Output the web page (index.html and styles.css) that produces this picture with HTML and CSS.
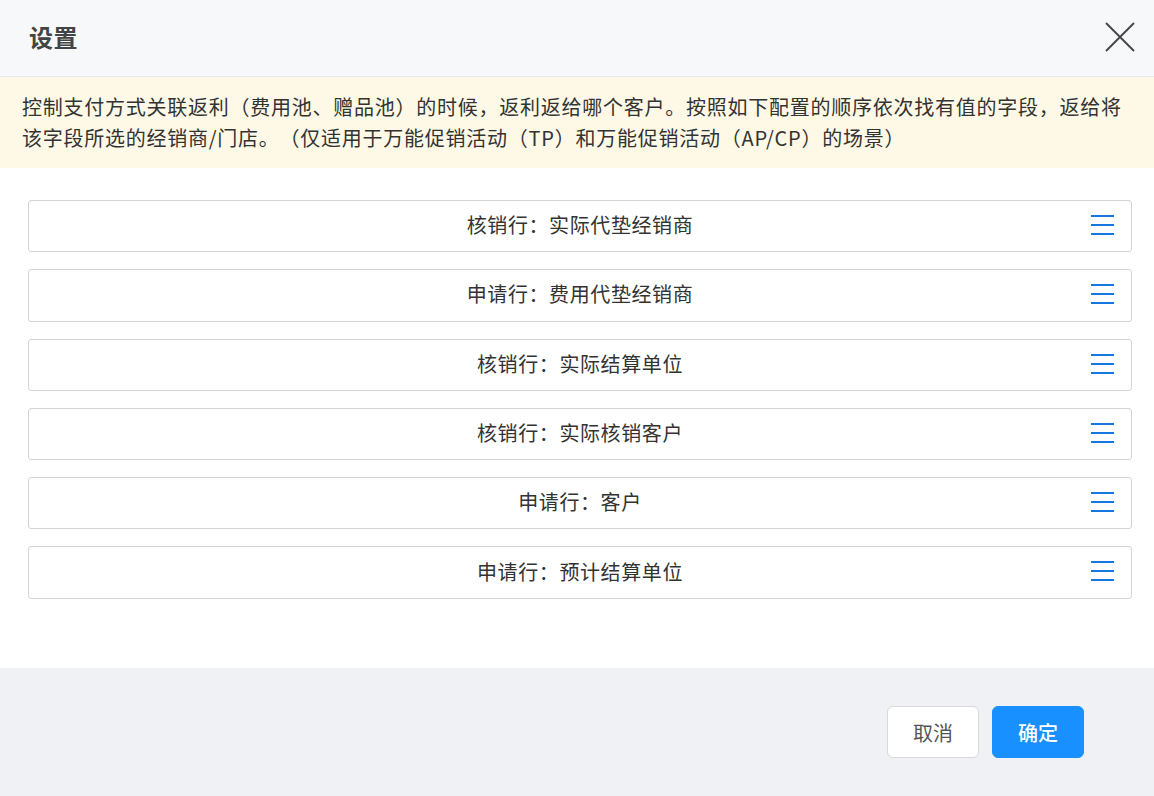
FILE: index.html
```html
<!DOCTYPE html>
<html lang="zh-CN">
<head>
    <meta charset="UTF-8">
    <meta name="viewport" content="width=device-width, initial-scale=1.0">
    <title>设置</title>
    <link rel="stylesheet" href="styles.css">
</head>
<body>
    <div class="dialog">
        <div class="dialog-header">
            <h1>设置</h1>
            <button class="close-btn" type="button" aria-label="关闭">
                <svg width="30" height="30" viewBox="0 0 30 30">
                    <path d="M1 1 L29 29 M29 1 L1 29" stroke="#444" stroke-width="1.8" fill="none"/>
                </svg>
            </button>
        </div>

        <div class="notice">
            控制支付方式关联返利（费用池、赠品池）的时候，返利返给哪个客户。按照如下配置的顺序依次找有值的字段，返给将该字段所选的经销商/门店。（仅适用于万能促销活动（TP）和万能促销活动（AP/CP）的场景）
        </div>

        <div class="dialog-body">
            <ul class="sort-list">
                <li class="sort-item"><span>核销行：实际代垫经销商</span><i class="drag-handle"></i></li>
                <li class="sort-item"><span>申请行：费用代垫经销商</span><i class="drag-handle"></i></li>
                <li class="sort-item"><span>核销行：实际结算单位</span><i class="drag-handle"></i></li>
                <li class="sort-item"><span>核销行：实际核销客户</span><i class="drag-handle"></i></li>
                <li class="sort-item"><span>申请行：客户</span><i class="drag-handle"></i></li>
                <li class="sort-item"><span>申请行：预计结算单位</span><i class="drag-handle"></i></li>
            </ul>
        </div>

        <div class="dialog-footer">
            <button class="btn btn-default" type="button">取消</button>
            <button class="btn btn-primary" type="button">确定</button>
        </div>
    </div>
</body>
</html>
```

FILE: styles.css
```css
* {
    margin: 0;
    padding: 0;
    box-sizing: border-box;
}

body {
    font-family: "Noto Sans CJK SC", "Noto Sans", sans-serif;
    background: #fff;
    color: #333;
    width: 1154px;
    height: 796px;
    overflow: hidden;
}

.dialog {
    display: flex;
    flex-direction: column;
    height: 796px;
}

.dialog-header {
    height: 77px;
    background: #f7f8fa;
    border-bottom: 1px solid #e6e8eb;
    display: flex;
    align-items: center;
    justify-content: space-between;
    padding: 0 19px 0 29px;
}

.dialog-header h1 {
    font-size: 24px;
    font-weight: 700;
    color: #444;
    letter-spacing: 0.5px;
    margin-top: -4px;
}

.close-btn {
    background: none;
    border: none;
    width: 30px;
    height: 30px;
    cursor: pointer;
    margin-top: -2px;
}

.close-btn svg {
    display: block;
}

.notice {
    background: #fef9e6;
    padding: 14px 22px 15px;
    font-size: 20px;
    line-height: 31px;
    letter-spacing: 0.75px;
    color: #333;
    text-spacing-trim: space-all;
}

.dialog-body {
    flex: 1;
    padding: 32px 22px 0 28px;
}

.sort-list {
    list-style: none;
    display: flex;
    flex-direction: column;
    gap: 17px;
}

.sort-item {
    height: 52.3px;
    border: 1px solid #d4d4d4;
    border-radius: 3px;
    display: flex;
    align-items: center;
    justify-content: center;
    padding-bottom: 3px;
    position: relative;
    font-size: 20px;
    letter-spacing: 0.6px;
    color: #333;
    text-spacing-trim: space-all;
}

.drag-handle {
    position: absolute;
    right: 17px;
    top: 14px;
    width: 23px;
    height: 20px;
    background:
        linear-gradient(#1677e0, #1677e0) 0 0 / 100% 2px no-repeat,
        linear-gradient(#1677e0, #1677e0) 0 9px / 100% 2px no-repeat,
        linear-gradient(#1677e0, #1677e0) 0 18px / 100% 2px no-repeat;
    cursor: move;
}

.dialog-footer {
    height: 128px;
    background: #f0f1f5;
    display: flex;
    align-items: center;
    justify-content: flex-end;
    gap: 13px;
    padding-right: 70px;
}

.btn {
    height: 52px;
    width: 92px;
    border-radius: 6px;
    font-family: inherit;
    font-size: 20px;
    cursor: pointer;
}

.btn-default {
    background: #fff;
    border: 1px solid #d9d9d9;
    color: #555;
}

.btn-primary {
    background: #1890ff;
    border: 1px solid #1890ff;
    color: #fff;
    font-weight: 500;
}
```
